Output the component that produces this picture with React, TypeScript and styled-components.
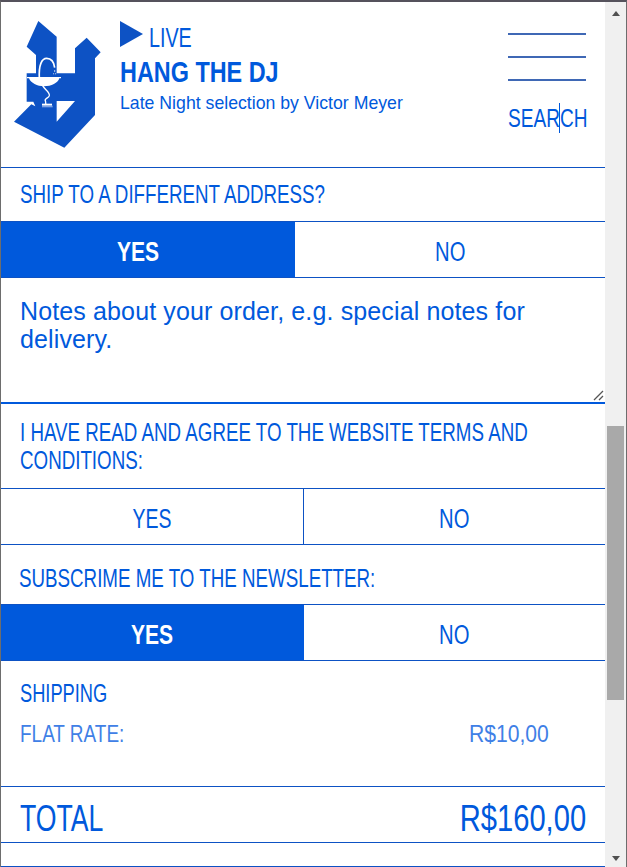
import React from "react";
import styled, { createGlobalStyle } from "styled-components";

const blue = "#0059dc";
const line = "#0d52c4";

const Global = createGlobalStyle`
  html, body { margin: 0; padding: 0; background: #fff; overflow: hidden; }
  * { box-sizing: border-box; }
`;
const Frame = styled.div`
  width: 627px; height: 867px; display: flex; overflow: hidden;
  border-top: 2px solid #55525c; border-left: 1px solid #6d6d6d; border-right: 1px solid #6d6d6d;
  font-family: "Liberation Sans", sans-serif; color: ${blue};
`;
const Page = styled.main` width: 604px; flex: none; display: flex; flex-direction: column; `;
const Scrollbar = styled.aside`
  width: 21px; flex: none; background: #f0f0f0; position: relative; display:flex; flex-direction:column; justify-content:space-between; align-items:center;
`;
const Thumb = styled.div` position: absolute; left: 2px; right: 2px; top: 424px; height: 274px; background: #a9a9a9; `;
const Arrow = styled.div<{ $down?: boolean }>`
  width: 0; height: 0; border-left: 4.5px solid transparent; border-right: 4.5px solid transparent;
  ${p => p.$down ? "border-top: 5px solid #505050; margin-bottom: 6px;" : "border-bottom: 5px solid #505050; margin-top: 9px;"}
`;
/* The reference face is a condensed grotesque; no condensed family is installed, so the text is squeezed horizontally. */
const Narrow = styled.span<{ $k?: number; $o?: string }>`
  display: inline-block; white-space: nowrap;
  transform: scaleX(${p => p.$k ?? 0.75});
  transform-origin: ${p => p.$o ?? "left"} center;
`;
const Header = styled.header` height: 166px; flex: none; display: flex; border-bottom: 1px solid ${line}; padding: 19px 19px 0 13px; `;
const Logo = styled.svg` width: 88px; height: 128px; flex: none; `;
const Brand = styled.div` margin-left: 18px; flex: 1; display: flex; flex-direction: column; `;
const Live = styled.div` display:flex; align-items:flex-start; height: 33px; font-size: 27px; line-height: 34px; gap: 6px; `;
const Play = styled.i` display:block; width: 0; height: 0; border-left: 23px solid #0d52c4; border-top: 13.5px solid transparent; border-bottom: 13.5px solid transparent; `;
const Show = styled.div` font-size: 30px; line-height: 36px; font-weight: 700; `;
const Sub = styled.div` font-size: 17.7px; line-height: 22px; margin-top: 2px; white-space: nowrap; `;
const Menu = styled.div` width: 78px; display:flex; flex-direction:column; padding-top: 12px; `;
const Bar = styled.i` display:block; height: 2px; background: #3f68b5; margin-bottom: 21px; `;
const Search = styled.div` font-size: 26px; line-height: 32px; position: relative; `;
const Caret = styled.i` position: absolute; left: 51px; top: 1px; width: 1px; height: 30px; background: ${blue}; `;
const Label = styled.div<{ $h: number; $px?: number; $pt?: number; $pb?: number }>`
  height: ${p => p.$h}px; flex: none; display: flex; flex-direction: column; justify-content: center; align-items: flex-start;
  padding: ${p => p.$pt ?? 0}px 0 ${p => p.$pb ?? 0}px ${p => p.$px ?? 19}px; font-size: 25px; line-height: 28px; border-bottom: 1px solid ${line};
`;
const Toggle = styled.div<{ $h: number; $split: number }>`
  height: ${p => p.$h}px; flex: none; display: grid; grid-template-columns: ${p => p.$split}px 1fr; border-bottom: 1px solid ${line};
`;
const Option = styled.div<{ $on?: boolean; $div?: boolean; $shift?: number }>`
  display:flex; align-items:center; justify-content:center; font-size: 27px; line-height: 1; padding-top: 6px;
  padding-right: ${p => p.$shift ?? 0}px;
  font-weight: ${p => p.$on ? 700 : 400}; color: ${p => p.$on ? "#fff" : blue}; background: ${p => p.$on ? blue : "#fff"};
  ${p => p.$div ? `border-right: 1px solid ${line};` : ""}
`;
const Notes = styled.div`
  height: 126px; flex: none; position: relative; border-bottom: 2px solid ${blue}; padding: 19px 19px 0 19px;
  font-size: 25px; line-height: 28px; letter-spacing: 0.13px;
`;
const Grip = styled.svg` position: absolute; right: 1px; bottom: 1px; width: 12px; height: 12px; `;
const Shipping = styled.section` height: 126px; flex: none; border-bottom: 1px solid ${line}; padding: 17px 19px 0; `;
const ShipTitle = styled.div` font-size: 25px; line-height: 30px; `;
const Rate = styled.div` display:flex; justify-content:space-between; margin-top: 11px; padding-right: 37px; font-size: 24px; line-height: 30px; color: #3f80e6; `;
const Total = styled.section` height: 56px; flex: none; display:flex; justify-content:space-between; align-items:center; padding: 8px 19px 0; font-size: 36px; border-bottom: 1px solid ${line}; `;
const Tail = styled.div` height: 24px; flex: none; border-bottom: 1px solid ${line}; `;

const App = () => (
  <>
    <Global />
    <Frame>
      <Page>
        <Header>
          <Logo viewBox="12 18 264 384" aria-hidden="true">
            <path fill="#0d52c4" fillRule="evenodd" d="M85 18 L140 65 V175 H195 V100 L230 68 L272 112 L255 130 V300 L163 398 L12 320 L64 268 L76 274 L70 260 H50 V175 H78 V120 L50 95 Z M140 258 V320 L195 258 Z" />
            <g fill="none" stroke="#fff">
              <path strokeWidth="5" d="M88 190 C86 150 95 130 110 130 C124 130 132 142 134 158" />
              <path strokeWidth="4" d="M98 212 C104 224 120 232 118 242 C116 250 102 250 106 258 C108 264 110 266 104 270" />
            </g>
            <path fill="#fff" d="M51 186 H153 V190 H148 C144 204 124 214 102 214 C82 214 62 204 57 190 H51 Z" />
            <path fill="#fff" d="M96 266 H126 V272 H96 Z" />
            <path fill="#7fa3e4" d="M96 272 H128 V277 H96 Z" />
            <circle cx="134" cy="168" r="2" fill="#fff" />
            <circle cx="131" cy="176" r="1.6" fill="#fff" />
            <circle cx="137" cy="176" r="1.6" fill="#fff" />
          </Logo>
          <Brand>
            <Live><Play /><Narrow $k={0.73}>LIVE</Narrow></Live>
            <Show><Narrow $k={0.78}>HANG THE DJ</Narrow></Show>
            <Sub>Late Night selection by Victor Meyer</Sub>
          </Brand>
          <Menu>
            <Bar /><Bar /><Bar />
            <Search><Narrow $k={0.733}>SEARCH</Narrow><Caret /></Search>
          </Menu>
        </Header>
        <Label $h={54} $pb={2}><Narrow>SHIP TO A DIFFERENT ADDRESS?</Narrow></Label>
        <Toggle $h={56} $split={294}>
          <Option $on $shift={20}><Narrow $k={0.78} $o="center">YES</Narrow></Option>
          <Option><Narrow $o="center">NO</Narrow></Option>
        </Toggle>
        <Notes>Notes about your order, e.g. special notes for delivery.
          <Grip viewBox="0 0 12 12"><path stroke="#555" strokeWidth="1.3" d="M2 11 L11 2 M7 11 L11 7" /></Grip>
        </Notes>
        <Label $h={85}>
          <Narrow>I HAVE READ AND AGREE TO THE WEBSITE TERMS AND</Narrow>
          <Narrow>CONDITIONS:</Narrow>
        </Label>
        <Toggle $h={56} $split={303}>
          <Option $div><Narrow $k={0.72} $o="center">YES</Narrow></Option>
          <Option><Narrow $o="center">NO</Narrow></Option>
        </Toggle>
        <Label $h={60} $px={18} $pt={6}><Narrow>SUBSCRIME ME TO THE NEWSLETTER:</Narrow></Label>
        <Toggle $h={56} $split={303}>
          <Option $on><Narrow $k={0.78} $o="center">YES</Narrow></Option>
          <Option><Narrow $o="center">NO</Narrow></Option>
        </Toggle>
        <Shipping>
          <ShipTitle><Narrow $k={0.73}>SHIPPING</Narrow></ShipTitle>
          <Rate>
            <Narrow $k={0.79}>FLAT RATE:</Narrow>
            <Narrow $k={0.88} $o="right">R$10,00</Narrow>
          </Rate>
        </Shipping>
        <Total>
          <Narrow $k={0.74}>TOTAL</Narrow>
          <Narrow $k={0.81} $o="right">R$160,00</Narrow>
        </Total>
        <Tail />
      </Page>
      <Scrollbar>
        <Arrow />
        <Thumb />
        <Arrow $down />
      </Scrollbar>
    </Frame>
  </>
);
export default App;
